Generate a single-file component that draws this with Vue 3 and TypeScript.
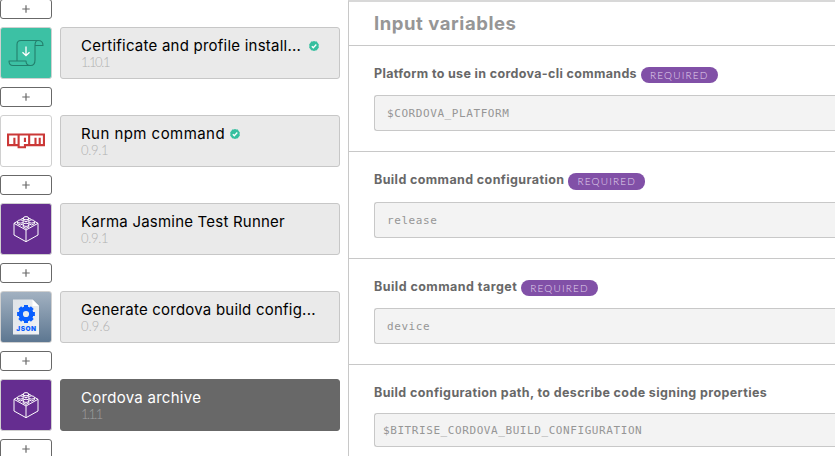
<script setup lang="ts">
type IconKind = 'certificate' | 'npm' | 'brick' | 'json'

interface Step {
  title: string
  version: string
  icon: IconKind
  verified?: boolean
  truncated?: boolean
  selected?: boolean
  tracking: number
  versionTracking: number
}

interface InputVariable {
  label: string
  value: string
  required?: boolean
  size: 'regular' | 'tall' | 'compact'
  tracking: number
}

const steps: Step[] = [
  { title: 'Certificate and profile install...', version: '1.10.1', icon: 'certificate', verified: true, truncated: true, tracking: 0.23, versionTracking: -1.35 },
  { title: 'Run npm command', version: '0.9.1', icon: 'npm', verified: true, tracking: 0.45, versionTracking: -0.3 },
  { title: 'Karma Jasmine Test Runner', version: '0.9.1', icon: 'brick', tracking: 0.21, versionTracking: -0.3 },
  { title: 'Generate cordova build config...', version: '0.9.6', icon: 'json', tracking: 0.22, versionTracking: 0.1 },
  { title: 'Cordova archive', version: '1.1.1', icon: 'brick', selected: true, tracking: 0.28, versionTracking: -1.6 },
]

const inputs: InputVariable[] = [
  { label: 'Platform to use in cordova-cli commands', value: '$CORDOVA_PLATFORM', required: true, size: 'regular', tracking: 0.34 },
  { label: 'Build command configuration', value: 'release', required: true, size: 'tall', tracking: 0.39 },
  { label: 'Build command target', value: 'device', required: true, size: 'regular', tracking: 0.46 },
  { label: 'Build configuration path, to describe code signing properties', value: '$BITRISE_CORDOVA_BUILD_CONFIGURATION', size: 'compact', tracking: 0.38 },
]
</script>

<template>
  <main class="editor">
    <section class="workflow">
      <button class="add" type="button">
        <svg width="8" height="8" viewBox="0 0 8 8"><path d="M4 0.3v7.4M0.3 4h7.4" /></svg>
      </button>
      <template v-for="step in steps" :key="step.title">
        <div class="step">
          <div class="tile" :class="step.icon">
            <svg v-if="step.icon === 'certificate'" width="50" height="50" viewBox="0 0 50 50" fill="none">
              <path
                d="M37 12.5H20q-4 0-4 4v16.5M37 12.5q5 0 5 5h-8q0-5 3-5ZM34 17.5V32q0 5.500-4.500 5.500H12q-4 0-4-4.500h17q0 4.500 4.500 4.500"
                stroke="#237f6c" stroke-width="1.1" stroke-linejoin="round"
              />
              <path d="M25 18.500v9M21.500 24.200l3.500 3.500 3.500-3.500" stroke="#fff" stroke-width="1.3" />
            </svg>
            <svg v-else-if="step.icon === 'npm'" width="50" height="50" viewBox="0 0 50 50">
              <g transform="translate(6 17.500) scale(2.111)">
                <path d="M0 0h18v6H9v1H5V6H0z" fill="#fff" />
                <path
                  d="M0 0h18v6H9v1H5V6H0zM1 5h2V2h1v3h1V1H1zM6 1v5h2V5h2V1zM8 2h1v2H8zM11 1v4h2V2h1v3h1V2h1v3h1V1z"
                  fill="#cb3837" fill-rule="evenodd"
                />
              </g>
            </svg>
            <svg v-else-if="step.icon === 'brick'" width="50" height="50" viewBox="0 0 50 50" fill="none" stroke="#fff" stroke-width="1">
              <path d="M13 19.300 25 26l12-6.700V31L25 37.700 13 31zM25 26v11.700M13 19.300l3.500-2M37 19.300l-3.500-2M19.500 15.500l2.500-1.300M30.500 15.500 28 14.200" />
              <path d="M22.300 14.200v2.300q2.700 2.400 5.400 0v-2.300M16.600 17.600v2.200q2.800 2.400 5.600 0v-2.200M27.800 17.600v2.200q2.800 2.400 5.600 0v-2.200M22.200 20.800v2.300q2.800 2.400 5.600 0v-2.300" />
              <ellipse cx="25" cy="14.200" rx="2.700" ry="1.600" />
              <ellipse cx="19.400" cy="17.500" rx="2.800" ry="1.600" />
              <ellipse cx="30.600" cy="17.500" rx="2.800" ry="1.600" />
              <ellipse cx="25" cy="20.800" rx="2.800" ry="1.600" />
            </svg>
            <svg v-else width="50" height="50" viewBox="0 0 50 50">
              <defs>
                <linearGradient id="page" x1="0" x2="1" y1="0" y2="1">
                  <stop offset="0" stop-color="#dfe3e8" />
                  <stop offset="1" stop-color="#f2f4f6" />
                </linearGradient>
              </defs>
              <path d="M12 7.500h19.500L38 14v28.500H12z" fill="url(#page)" />
              <path d="M31.500 7.500V14H38z" fill="#fff" />
              <circle cx="25" cy="22" r="5.300" fill="none" stroke="#0a5fff" stroke-width="4.400" />
              <path
                v-for="angle in [0, 45, 90, 135, 180, 225, 270, 315]" :key="angle"
                d="M23 13.100h4v3h-4z" fill="#0a5fff" :transform="`rotate(${angle} 25 22)`"
              />
              <text x="15.300" y="38.800" class="json-text" textLength="19.700" lengthAdjust="spacing">JSON</text>
            </svg>
          </div>
          <div class="card" :class="{ selected: step.selected }">
            <div class="title-row" :class="{ truncated: step.truncated }">
              <span class="title" :style="{ letterSpacing: step.tracking + 'px' }">{{ step.title }}</span>
              <svg v-if="step.verified" class="check" width="10" height="10" viewBox="0 0 10 10">
                <path
                  d="M5 0l1.400.5 1.500.1.700 1.400L9.800 3.200 9.600 5l.2 1.800-1.200 1.200-.7 1.300-1.500.1L5 10l-1.400-.6-1.500-.1L1.400 8 .2 6.800.4 5 .2 3.200 1.400 2l.7-1.400 1.500-.1z"
                  fill="#36bf9f"
                />
                <path d="M2.800 5.200l1.500 1.500 3-3.200" fill="none" stroke="#fff" stroke-width="1.3" />
              </svg>
            </div>
            <div class="version" :style="{ letterSpacing: step.versionTracking + 'px' }">{{ step.version }}</div>
          </div>
        </div>
        <button class="add" type="button">
          <svg width="8" height="8" viewBox="0 0 8 8"><path d="M4 0.3v7.4M0.3 4h7.4" /></svg>
        </button>
      </template>
    </section>

    <section class="details">
      <h2>Input variables</h2>
      <div v-for="input in inputs" :key="input.label" class="variable" :class="input.size">
        <div class="label-row">
          <span class="label" :style="{ letterSpacing: input.tracking + 'px' }">{{ input.label }}</span>
          <span v-if="input.required" class="badge">REQUIRED</span>
        </div>
        <div class="field">{{ input.value }}</div>
      </div>
    </section>
  </main>
</template>

<style>
body {
  overflow: hidden;
  background: #fff;
}
</style>

<style scoped>
.editor {
  display: flex;
  width: 835px;
  height: 456px;
  overflow: hidden;
  font-family: Inter, "Open Sans", sans-serif;
}

.workflow {
  display: flex;
  flex: none;
  flex-direction: column;
  gap: 8px;
  width: 348px;
  margin-top: -1px;
}

.add {
  display: flex;
  flex: none;
  align-items: center;
  justify-content: center;
  box-sizing: border-box;
  width: 52px;
  height: 20px;
  padding: 0;
  border: 1px solid #686868;
  border-radius: 3px;
  background: #fff;
}

.add path {
  stroke: #686868;
  stroke-width: 1.2;
}

.step {
  display: flex;
  flex: none;
  gap: 8px;
  height: 52px;
}

.tile {
  box-sizing: border-box;
  width: 52px;
  height: 52px;
  overflow: hidden;
  border: 1px solid #d0d0d0;
  border-radius: 3px;
}

.tile svg {
  display: block;
}

.certificate {
  background: #3cc1a4;
}

.npm {
  background: #fff;
}

.brick {
  background: #652d90;
}

.json {
  background: linear-gradient(#a2b1c1, #5d7791);
}

.json-text {
  fill: #0a5fff;
  font: 900 6.500px Inter, sans-serif;
}

.card {
  box-sizing: border-box;
  width: 280px;
  padding: 9px 20px 0;
  border: 1px solid #c7c7c7;
  border-radius: 3px;
  background: #eaeaea;
  color: #000;
}

.card.selected {
  border-color: #686868;
  background: #686868;
  color: #fff;
}

.title-row {
  display: flex;
  align-items: center;
  height: 18px;
  white-space: nowrap;
}

.title {
  font-size: 15px;
  line-height: 18px;
}

.check {
  flex: none;
  margin-left: 5px;
}

.truncated .check {
  margin-left: 7.500px;
}

.version {
  color: #b0b0b0;
  font-family: Lato, sans-serif;
  font-size: 13px;
  font-weight: 300;
  line-height: 15px;
}

.selected .version {
  color: #a0a0a0;
}

.details {
  flex: 1;
  min-width: 0;
  border-top: 2px solid #d8d8d8;
  border-left: 1px solid #c8c8c8;
  overflow: hidden;
}

h2 {
  box-sizing: border-box;
  height: 44px;
  margin: 0;
  padding-left: 25px;
  border-bottom: 1px solid #c8c8c8;
  color: #969696;
  font-size: 18.500px;
  font-weight: 700;
  line-height: 43px;
  letter-spacing: 0.550px;
}

.variable {
  box-sizing: border-box;
  height: 106px;
  padding: 21px 0 0 25px;
  border-bottom: 1px solid #c8c8c8;
}

.variable.tall {
  height: 107px;
}

.label-row {
  display: flex;
  align-items: flex-start;
  gap: 4px;
  height: 28px;
  white-space: nowrap;
}

.tall .label-row {
  height: 29px;
}

.compact .label-row {
  height: 27px;
}

.label {
  color: #686868;
  font-size: 12.500px;
  font-weight: 700;
  line-height: 14px;
}

.badge {
  box-sizing: border-box;
  width: 77px;
  height: 16px;
  padding-left: 9px;
  border-radius: 8px;
  background: #8150a7;
  color: #e2d3ed;
  font-family: Lato, sans-serif;
  font-size: 10px;
  font-weight: 300;
  line-height: 16px;
  letter-spacing: 1.200px;
}

.tall .badge {
  height: 17px;
}

.field {
  box-sizing: border-box;
  height: 36px;
  padding-left: 12px;
  border: 1px solid #c8c8c8;
  border-right: 0;
  border-radius: 3px 0 0 3px;
  background: #f3f3f3;
  color: #969696;
  font-family: "DejaVu Sans Mono", monospace;
  font-size: 11px;
  line-height: 36px;
  letter-spacing: 0.580px;
  white-space: nowrap;
}

.compact .field {
  height: 34px;
  padding-left: 8px;
  line-height: 34px;
}
</style>
